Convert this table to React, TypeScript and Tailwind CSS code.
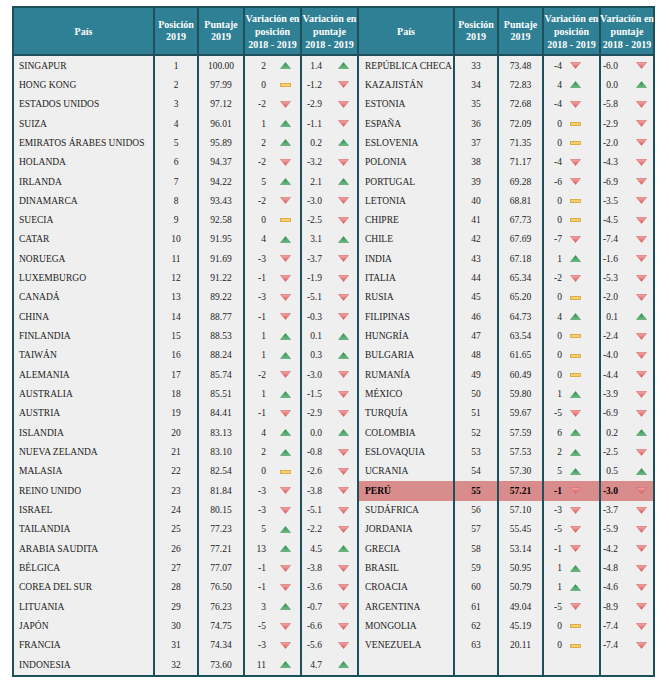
import React from "react";

type Row = [string, number, string, number, string];

const left: Row[] = [
  ["SINGAPUR", 1, "100.00", 2, "1.4"],
  ["HONG KONG", 2, "97.99", 0, "-1.2"],
  ["ESTADOS UNIDOS", 3, "97.12", -2, "-2.9"],
  ["SUIZA", 4, "96.01", 1, "-1.1"],
  ["EMIRATOS ÁRABES UNIDOS", 5, "95.89", 2, "0.2"],
  ["HOLANDA", 6, "94.37", -2, "-3.2"],
  ["IRLANDA", 7, "94.22", 5, "2.1"],
  ["DINAMARCA", 8, "93.43", -2, "-3.0"],
  ["SUECIA", 9, "92.58", 0, "-2.5"],
  ["CATAR", 10, "91.95", 4, "3.1"],
  ["NORUEGA", 11, "91.69", -3, "-3.7"],
  ["LUXEMBURGO", 12, "91.22", -1, "-1.9"],
  ["CANADÁ", 13, "89.22", -3, "-5.1"],
  ["CHINA", 14, "88.77", -1, "-0.3"],
  ["FINLANDIA", 15, "88.53", 1, "0.1"],
  ["TAIWÁN", 16, "88.24", 1, "0.3"],
  ["ALEMANIA", 17, "85.74", -2, "-3.0"],
  ["AUSTRALIA", 18, "85.51", 1, "-1.5"],
  ["AUSTRIA", 19, "84.41", -1, "-2.9"],
  ["ISLANDIA", 20, "83.13", 4, "0.0"],
  ["NUEVA ZELANDA", 21, "83.10", 2, "-0.8"],
  ["MALASIA", 22, "82.54", 0, "-2.6"],
  ["REINO UNIDO", 23, "81.84", -3, "-3.8"],
  ["ISRAEL", 24, "80.15", -3, "-5.1"],
  ["TAILANDIA", 25, "77.23", 5, "-2.2"],
  ["ARABIA SAUDITA", 26, "77.21", 13, "4.5"],
  ["BÉLGICA", 27, "77.07", -1, "-3.8"],
  ["COREA DEL SUR", 28, "76.50", -1, "-3.6"],
  ["LITUANIA", 29, "76.23", 3, "-0.7"],
  ["JAPÓN", 30, "74.75", -5, "-6.6"],
  ["FRANCIA", 31, "74.34", -3, "-5.6"],
  ["INDONESIA", 32, "73.60", 11, "4.7"],
];

const right: (Row | null)[] = [
  ["REPÚBLICA CHECA", 33, "73.48", -4, "-6.0"],
  ["KAZAJISTÁN", 34, "72.83", 4, "0.0"],
  ["ESTONIA", 35, "72.68", -4, "-5.8"],
  ["ESPAÑA", 36, "72.09", 0, "-2.9"],
  ["ESLOVENIA", 37, "71.35", 0, "-2.0"],
  ["POLONIA", 38, "71.17", -4, "-4.3"],
  ["PORTUGAL", 39, "69.28", -6, "-6.9"],
  ["LETONIA", 40, "68.81", 0, "-3.5"],
  ["CHIPRE", 41, "67.73", 0, "-4.5"],
  ["CHILE", 42, "67.69", -7, "-7.4"],
  ["INDIA", 43, "67.18", 1, "-1.6"],
  ["ITALIA", 44, "65.34", -2, "-5.3"],
  ["RUSIA", 45, "65.20", 0, "-2.0"],
  ["FILIPINAS", 46, "64.73", 4, "0.1"],
  ["HUNGRÍA", 47, "63.54", 0, "-2.4"],
  ["BULGARIA", 48, "61.65", 0, "-4.0"],
  ["RUMANÍA", 49, "60.49", 0, "-4.4"],
  ["MÉXICO", 50, "59.80", 1, "-3.9"],
  ["TURQUÍA", 51, "59.67", -5, "-6.9"],
  ["COLOMBIA", 52, "57.59", 6, "0.2"],
  ["ESLOVAQUIA", 53, "57.53", 2, "-2.5"],
  ["UCRANIA", 54, "57.30", 5, "0.5"],
  ["PERÚ", 55, "57.21", -1, "-3.0"],
  ["SUDÁFRICA", 56, "57.10", -3, "-3.7"],
  ["JORDANIA", 57, "55.45", -5, "-5.9"],
  ["GRECIA", 58, "53.14", -1, "-4.2"],
  ["BRASIL", 59, "50.95", 1, "-4.8"],
  ["CROACIA", 60, "50.79", 1, "-4.6"],
  ["ARGENTINA", 61, "49.04", -5, "-8.9"],
  ["MONGOLIA", 62, "45.19", 0, "-7.4"],
  ["VENEZUELA", 63, "20.11", 0, "-7.4"],
  null,
];

function Up() {
  return (
    <svg width="11" height="7" viewBox="0 0 11 7" className="block shrink-0">
      <defs>
        <linearGradient id="gup" x1="0" y1="0" x2="0" y2="1">
          <stop offset="0" stopColor="#2f8a4e" />
          <stop offset="1" stopColor="#6cbb82" />
        </linearGradient>
      </defs>
      <polygon points="5.5,0.5 10.5,6.5 0.5,6.5" fill="url(#gup)" stroke="#3f9a5c" strokeWidth="0.6" />
    </svg>
  );
}

function Down() {
  return (
    <svg width="11" height="7" viewBox="0 0 11 7" className="block shrink-0">
      <defs>
        <linearGradient id="gdn" x1="0" y1="0" x2="0" y2="1">
          <stop offset="0" stopColor="#f4a6a6" />
          <stop offset="1" stopColor="#d95c5c" />
        </linearGradient>
      </defs>
      <polygon points="0.5,0.5 10.5,0.5 5.5,6.5" fill="url(#gdn)" stroke="#d86565" strokeWidth="0.6" />
    </svg>
  );
}

function Eq() {
  return (
    <svg width="11" height="4" viewBox="0 0 11 4" className="block shrink-0">
      <rect x="0.5" y="0.5" width="10" height="3" fill="#f6d070" stroke="#dba030" strokeWidth="0.8" />
    </svg>
  );
}

function PosIcon({ v }: { v: number }) {
  if (v > 0) return <Up />;
  if (v < 0) return <Down />;
  return <Eq />;
}

function PtsIcon({ v }: { v: string }) {
  return parseFloat(v) < 0 ? <Down /> : <Up />;
}

const B = "border-l-2 border-[#1e505c]";

function Header({ first }: { first: boolean }) {
  return (
    <>
      <div
        className={`${first ? "w-[139px]" : `w-[96px] ${B}`} flex items-center justify-center`}
      >
        País
      </div>
      <div className={`w-[44px] ${B} flex items-center justify-center leading-[12px]`}>
        Posición
        <br />
        2019
      </div>
      <div className={`${first ? "w-[46px]" : "w-[45px]"} ${B} flex items-center justify-center leading-[12px]`}>
        Puntaje
        <br />
        2019
      </div>
      <div className={`w-[57px] ${B} flex items-center justify-center leading-[13px] whitespace-nowrap`}>
        Variación en
        <br />
        posición
        <br />
        2018 - 2019
      </div>
      <div className={`${first ? "w-[57px]" : "w-[54px]"} ${B} flex items-center justify-center leading-[13px] whitespace-nowrap`}>
        Variación en
        <br />
        puntaje
        <br />
        2018 - 2019
      </div>
    </>
  );
}

function LeftCells({ r }: { r: Row }) {
  return (
    <>
      <div className="w-[139px] pl-[5px] flex items-center whitespace-nowrap">{r[0]}</div>
      <div className={`w-[44px] ${B} flex items-center justify-center`}>{r[1]}</div>
      <div className={`w-[46px] ${B} flex items-center justify-center`}>{r[2]}</div>
      <div className={`w-[57px] ${B} flex items-center`}>
        <span className="w-[21px] text-right">{r[3]}</span>
        <span className="ml-[14px]">
          <PosIcon v={r[3]} />
        </span>
      </div>
      <div className={`w-[57px] ${B} flex items-center`}>
        <span className="w-[20px] text-right">{r[4]}</span>
        <span className="ml-[16px]">
          <PtsIcon v={r[4]} />
        </span>
      </div>
    </>
  );
}

function RightCells({ r }: { r: Row | null }) {
  const peru = r !== null && r[0] === "PERÚ";
  return (
    <div className={`flex ${peru ? "bg-[#d98c8c] font-bold text-black" : ""}`}>
      <div className={`w-[96px] ${B} pl-[6px] flex items-center whitespace-nowrap overflow-hidden`}>{r ? r[0] : ""}</div>
      <div className={`w-[44px] ${B} flex items-center justify-center`}>{r ? r[1] : ""}</div>
      <div className={`w-[45px] ${B} flex items-center justify-center`}>{r ? r[2] : ""}</div>
      <div className={`w-[57px] ${B} flex items-center`}>
        {r && (
          <>
            <span className="w-[18px] text-right">{r[3]}</span>
            <span className="ml-[8px]">
              <PosIcon v={r[3]} />
            </span>
          </>
        )}
      </div>
      <div className={`w-[54px] ${B} flex items-center`}>
        {r && (
          <>
            <span className="w-[17px] text-right">{r[4]}</span>
            <span className="ml-[18px]">
              <PtsIcon v={r[4]} />
            </span>
          </>
        )}
      </div>
    </div>
  );
}

export default function App() {
  return (
    <div className="w-[669px] h-[687px] bg-white pt-[6px] pl-[12px]" style={{ fontFamily: '"Liberation Serif", "Times New Roman", serif' }}>
      <div className="w-[643px] border-2 border-[#1e505c] bg-[#efefef]">
        <div className="flex h-[48px] bg-[#2f8095] border-b-2 border-[#1e505c] text-white font-bold text-[10px] text-center">
          <Header first={true} />
          <Header first={false} />
        </div>
        {left.map((r, i) => (
          <div key={i} className="flex h-[19.33px] text-[9.5px] text-[#1c1c1c]">
            <LeftCells r={r} />
            <RightCells r={right[i]} />
          </div>
        ))}
      </div>
    </div>
  );
}
